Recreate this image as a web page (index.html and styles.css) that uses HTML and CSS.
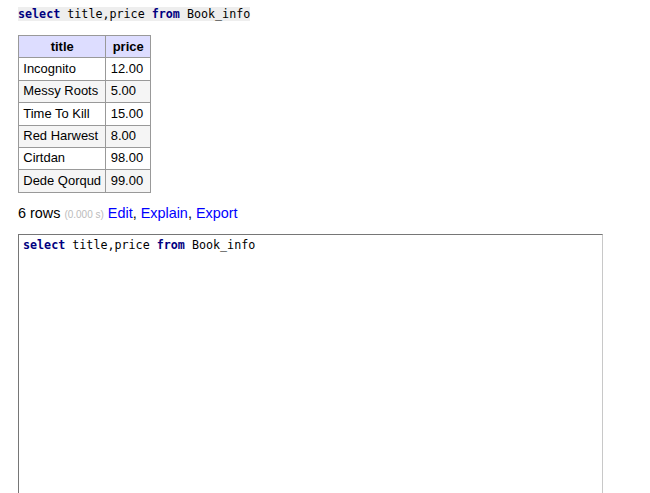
FILE: index.html
```html
<!DOCTYPE html>
<html>
<head>
<meta charset="utf-8">
<link rel="stylesheet" href="styles.css">
</head>
<body>
<div class="content">
  <p class="query"><code class="sql"><span class="kw">select</span> title,price <span class="kw">from</span> Book_info</code></p>
  <table class="result">
    <thead>
      <tr><th>title</th><th>price</th></tr>
    </thead>
    <tbody>
      <tr><td>Incognito</td><td>12.00</td></tr>
      <tr><td>Messy Roots</td><td>5.00</td></tr>
      <tr><td>Time To Kill</td><td>15.00</td></tr>
      <tr><td>Red Harwest</td><td>8.00</td></tr>
      <tr><td>Cirtdan</td><td>98.00</td></tr>
      <tr><td>Dede Qorqud</td><td>99.00</td></tr>
    </tbody>
  </table>
  <p class="rows">6 rows <span class="time">(0.000 s)</span> <a href="#">Edit</a>, <a href="#">Explain</a>, <a href="#">Export</a></p>
  <pre class="sqlarea"><span class="kw">select</span> title,price <span class="kw">from</span> Book_info</pre>
</div>
</body>
</html>
```

FILE: styles.css
```css
html, body {
  margin: 0;
  padding: 0;
  background: #fff;
}
body {
  font-family: "Liberation Sans", Arial, sans-serif;
  font-size: 14.4px;
  line-height: 1.25;
  color: #000;
}
.content {
  padding: 0 0 0 18px;
}
p {
  margin: 0;
}
.query {
  padding-top: 4px;
}
code, pre {
  font-family: "DejaVu Sans Mono", monospace;
  font-size: 11.7px;
}
code.sql {
  background: #eee;
}
.kw {
  color: #000080;
  font-weight: bold;
}
table.result {
  margin-top: 13px;
  border-collapse: collapse;
  font-size: 12.96px;
}
table.result th, table.result td {
  border: 1px solid #999;
  padding: 2.6px 4.3px;
  text-align: left;
}
table.result thead th {
  background: #ddf;
  text-align: center;
  font-weight: bold;
  padding: 2.6px 6.3px;
}
table.result tbody tr:nth-child(2n) {
  background: #f5f5f5;
}
.rows {
  margin-top: 11px;
}
.time {
  color: #bbb;
  font-size: 10px;
}
a {
  color: #00f;
  text-decoration: none;
}
.sqlarea {
  box-sizing: border-box;
  width: 585px;
  height: 330px;
  margin: 12px 0 0 0;
  padding: 3px 4px 2px 4px;
  border: 1px solid;
  border-color: #767676 #c8c8c8 #c8c8c8 #767676;
  line-height: 1.2;
}
```
